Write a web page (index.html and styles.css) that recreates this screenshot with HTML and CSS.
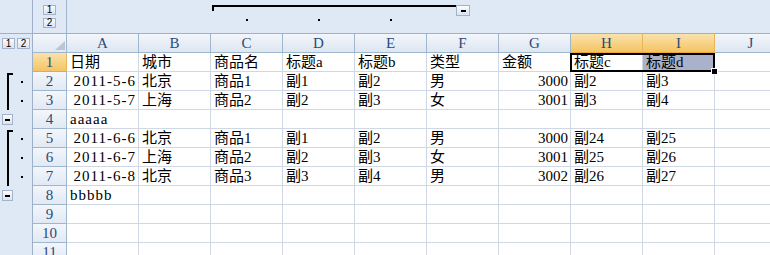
FILE: index.html
```html
<!DOCTYPE html>
<html lang="zh-CN">
  <head>
    <meta charset="UTF-8" />
    <title>分级显示</title>
    <link rel="stylesheet" href="styles.css">
  </head>
  <body>
    <div class="sheet">
      <!-- 列分级区 -->
      <div class="row top">
        <div class="ol"></div>
        <div class="rh lv">
          <span class="ob">1</span>
          <span class="ob">2</span>
        </div>
        <div class="tc"></div>
        <div class="tc"></div>
        <div class="tc grp"><span class="hline first"></span><span class="dot"></span></div>
        <div class="tc grp"><span class="hline"></span><span class="dot"></span></div>
        <div class="tc grp"><span class="hline"></span><span class="dot"></span></div>
        <div class="tc end"><span class="hline short"></span><span class="ob minus wide"><i></i></span></div>
        <div class="tc"></div>
        <div class="tc"></div>
        <div class="tc"></div>
        <div class="tc"></div>
      </div>

      <!-- 列标 -->
      <div class="row">
        <div class="ol lv2"><span class="ob">1</span><span class="ob">2</span></div>
        <div class="rh corner"><span class="tri"></span></div>
        <div class="hd">A</div>
        <div class="hd">B</div>
        <div class="hd">C</div>
        <div class="hd">D</div>
        <div class="hd">E</div>
        <div class="hd">F</div>
        <div class="hd">G</div>
        <div class="hd sel">H</div>
        <div class="hd sel">I</div>
        <div class="hd">J</div>
      </div>

      <div class="row">
        <div class="ol"></div>
        <div class="rh sel">1</div>
        <div class="c">日期</div>
        <div class="c">城市</div>
        <div class="c">商品名</div>
        <div class="c">标题a</div>
        <div class="c">标题b</div>
        <div class="c">类型</div>
        <div class="c">金额</div>
        <div class="c active">标题c<span class="selbox"></span></div>
        <div class="c picked">标题d</div>
        <div class="c"></div>
      </div>

      <div class="row">
        <div class="ol"><span class="br first"></span><span class="dot"></span></div>
        <div class="rh">2</div>
        <div class="c n lat">2011-5-6</div>
        <div class="c">北京</div>
        <div class="c">商品1</div>
        <div class="c">副1</div>
        <div class="c">副2</div>
        <div class="c">男</div>
        <div class="c n">3000</div>
        <div class="c">副2</div>
        <div class="c">副3</div>
        <div class="c"></div>
      </div>

      <div class="row">
        <div class="ol"><span class="br"></span><span class="dot"></span></div>
        <div class="rh">3</div>
        <div class="c n lat">2011-5-7</div>
        <div class="c">上海</div>
        <div class="c">商品2</div>
        <div class="c">副2</div>
        <div class="c">副3</div>
        <div class="c">女</div>
        <div class="c n">3001</div>
        <div class="c">副3</div>
        <div class="c">副4</div>
        <div class="c"></div>
      </div>

      <div class="row">
        <div class="ol tog"><span class="ob minus"><i></i></span></div>
        <div class="rh">4</div>
        <div class="c lat">aaaaa</div>
        <div class="c"></div>
        <div class="c"></div>
        <div class="c"></div>
        <div class="c"></div>
        <div class="c"></div>
        <div class="c"></div>
        <div class="c"></div>
        <div class="c"></div>
        <div class="c"></div>
      </div>

      <div class="row">
        <div class="ol"><span class="br first"></span><span class="dot"></span></div>
        <div class="rh">5</div>
        <div class="c n lat">2011-6-6</div>
        <div class="c">北京</div>
        <div class="c">商品1</div>
        <div class="c">副1</div>
        <div class="c">副2</div>
        <div class="c">男</div>
        <div class="c n">3000</div>
        <div class="c">副24</div>
        <div class="c">副25</div>
        <div class="c"></div>
      </div>

      <div class="row">
        <div class="ol"><span class="br"></span><span class="dot"></span></div>
        <div class="rh">6</div>
        <div class="c n lat">2011-6-7</div>
        <div class="c">上海</div>
        <div class="c">商品2</div>
        <div class="c">副2</div>
        <div class="c">副3</div>
        <div class="c">女</div>
        <div class="c n">3001</div>
        <div class="c">副25</div>
        <div class="c">副26</div>
        <div class="c"></div>
      </div>

      <div class="row">
        <div class="ol"><span class="br"></span><span class="dot"></span></div>
        <div class="rh">7</div>
        <div class="c n lat">2011-6-8</div>
        <div class="c">北京</div>
        <div class="c">商品3</div>
        <div class="c">副3</div>
        <div class="c">副4</div>
        <div class="c">男</div>
        <div class="c n">3002</div>
        <div class="c">副26</div>
        <div class="c">副27</div>
        <div class="c"></div>
      </div>

      <div class="row">
        <div class="ol tog"><span class="ob minus"><i></i></span></div>
        <div class="rh">8</div>
        <div class="c lat">bbbbb</div>
        <div class="c"></div>
        <div class="c"></div>
        <div class="c"></div>
        <div class="c"></div>
        <div class="c"></div>
        <div class="c"></div>
        <div class="c"></div>
        <div class="c"></div>
        <div class="c"></div>
      </div>

      <div class="row">
        <div class="ol"></div>
        <div class="rh">9</div>
        <div class="c"></div><div class="c"></div><div class="c"></div><div class="c"></div><div class="c"></div>
        <div class="c"></div><div class="c"></div><div class="c"></div><div class="c"></div><div class="c"></div>
      </div>

      <div class="row">
        <div class="ol"></div>
        <div class="rh">10</div>
        <div class="c"></div><div class="c"></div><div class="c"></div><div class="c"></div><div class="c"></div>
        <div class="c"></div><div class="c"></div><div class="c"></div><div class="c"></div><div class="c"></div>
      </div>

      <div class="row">
        <div class="ol"></div>
        <div class="rh">11</div>
        <div class="c"></div><div class="c"></div><div class="c"></div><div class="c"></div><div class="c"></div>
        <div class="c"></div><div class="c"></div><div class="c"></div><div class="c"></div><div class="c"></div>
      </div>
    </div>
  </body>
</html>
```

FILE: styles.css
```css
body {
  margin: 0;
  width: 770px;
  height: 255px;
  overflow: hidden;
  background: #fff;
  color: #000;
  font-family: "Liberation Serif", "Noto Sans CJK SC", serif;
  font-size: 15px;
}

.sheet {
  width: 787px;
}

.row {
  display: flex;
  height: 19px;
}

.row > div {
  box-sizing: border-box;
  flex: none;
  height: 100%;
}

/* 分级显示区 */
.ol {
  width: 33px;
  background: #dfe8f5;
  border-right: 1px solid #9eb1c8;
  display: flex;
}

.row.top {
  height: 33px;
  background: #dfe8f5;
  border-bottom: 1px solid #9eb1c8;
}

.tc {
  width: 72px;
}

.lv {
  display: flex;
  flex-direction: column;
  align-items: center;
  gap: 3px;
  padding-top: 5px;
}

.row.top .rh {
  background: #dfe8f5;
  border-bottom: none;
}

.lv2 {
  padding: 4px 0 0 2px;
  gap: 2px;
  align-items: flex-start;
}

.ob {
  box-sizing: border-box;
  display: block;
  width: 13px;
  height: 11px;
  border: 1px solid #a3b3ca;
  background: linear-gradient(#fbfcfe, #dbe3ef);
  font-family: "Liberation Sans", Arial, sans-serif;
  font-size: 10px;
  line-height: 9px;
  text-align: center;
  color: #000;
}

.lv .ob {
  height: 10px;
  line-height: 8px;
}

.ob.minus {
  width: 11px;
  display: flex;
  align-items: center;
  justify-content: center;
}

.ob.minus.wide {
  width: 14px;
}

.ob.minus i {
  display: block;
  width: 5px;
  height: 2px;
  background: #000;
}

.dot {
  display: block;
  width: 2px;
  height: 2px;
  background: #000;
}

/* 行分级 */
.ol .br {
  width: 6px;
  margin-left: 7px;
  border-left: 2px solid #000;
  box-sizing: border-box;
}

.ol .br.first {
  margin-top: 1px;
  border-top: 2px solid #000;
}

.ol .dot {
  margin-left: 8px;
  align-self: center;
}

.ol.tog {
  padding: 4px 0 0 2px;
  align-items: flex-start;
}

/* 列分级 */
.tc.grp {
  display: flex;
  flex-direction: column;
  padding-top: 5px;
}

.hline {
  display: block;
  height: 6px;
  border-top: 2px solid #000;
  box-sizing: border-box;
}

.hline.first {
  margin-left: 1px;
  border-left: 2px solid #000;
}

.tc.grp .dot {
  align-self: center;
  margin-top: 8px;
  margin-right: 1px;
}

.tc.end {
  display: flex;
  align-items: flex-start;
  padding-top: 5px;
}

.hline.short {
  width: 29px;
  height: 2px;
}

/* 行号、列标 */
.rh {
  width: 34px;
  background: linear-gradient(#f3f6fb, #e1e9f4);
  border-right: 1px solid #9eb6ce;
  border-bottom: 1px solid #9eb6ce;
  text-align: center;
  line-height: 18px;
  color: #2b4b78;
}

.hd {
  width: 72px;
  background: linear-gradient(#f3f6fb, #dde6f2);
  border-right: 1px solid #9eb6ce;
  border-bottom: 1px solid #9eb6ce;
  text-align: center;
  line-height: 18px;
  color: #2b4b78;
}

.corner {
  display: flex;
  justify-content: flex-end;
  align-items: flex-end;
  padding: 0 1px 2px 0;
}

.tri {
  width: 0;
  height: 0;
  border-left: 10px solid transparent;
  border-bottom: 9px solid #b9c6d7;
}

.hd.sel,
.rh.sel {
  background: linear-gradient(#fae2ad, #f4c462);
  border-right-color: #e9b55a;
  border-bottom-color: #eaa93c;
}

/* 单元格 */
.c {
  width: 72px;
  border-right: 1px solid #d0d7e5;
  border-bottom: 1px solid #d0d7e5;
  padding: 0 2px 0 3px;
  line-height: 18px;
  white-space: nowrap;
}

.c.n {
  text-align: right;
}

.c.lat {
  letter-spacing: 1px;
}

.c.active {
  position: relative;
}

.c.picked {
  background: #aab2cb;
}

.selbox {
  position: absolute;
  left: -1px;
  top: 0;
  width: 145px;
  height: 19px;
  box-sizing: border-box;
  border: 2px solid #000;
}

.selbox::after {
  content: "";
  position: absolute;
  right: -4px;
  bottom: -4px;
  width: 5px;
  height: 5px;
  background: #000;
  box-shadow: 0 0 0 1px #fff;
}
```
